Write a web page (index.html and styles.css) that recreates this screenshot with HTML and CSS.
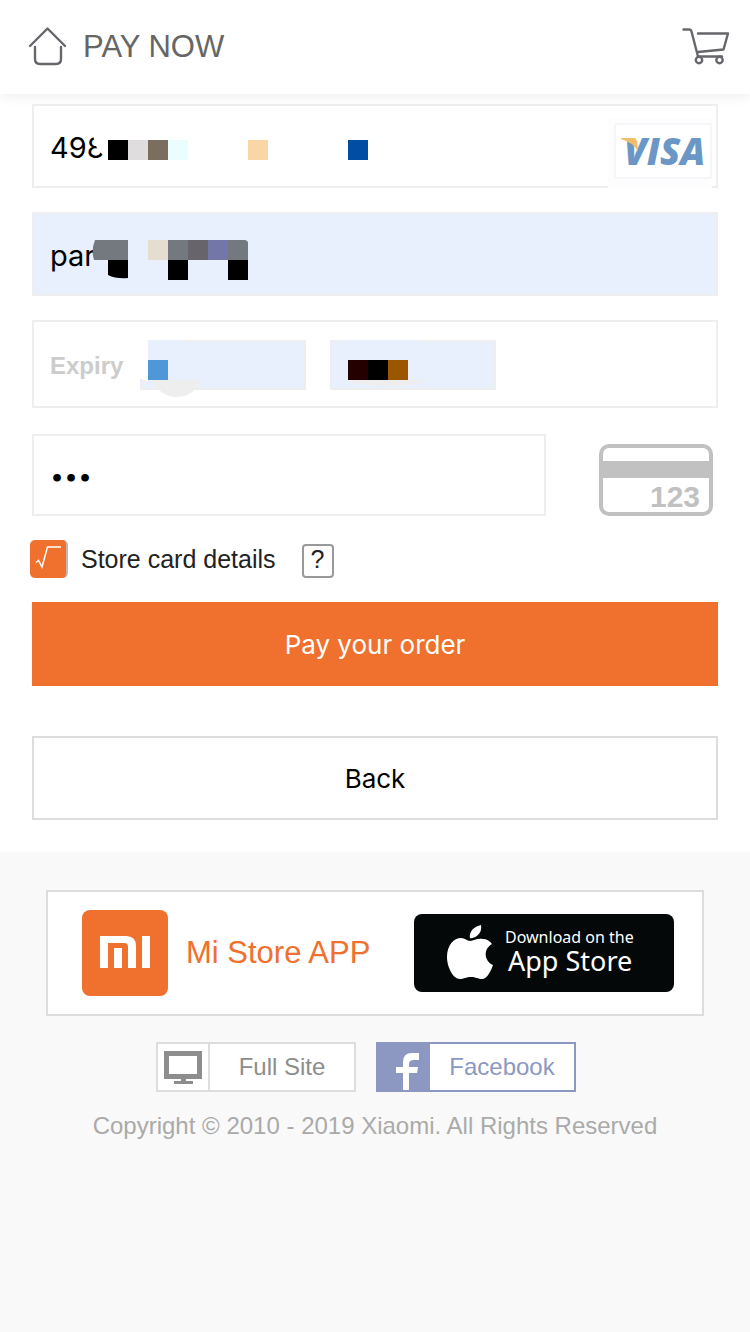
FILE: index.html
```html
<!DOCTYPE html>
<html lang="en">
<head>
<meta charset="utf-8">
<meta name="viewport" content="width=device-width">
<title>Pay now</title>
<link rel="stylesheet" href="styles.css">
</head>
<body>
<header class="topbar">
  <a class="topbar-link" href="#" aria-label="Home">
    <svg width="40" height="42" viewBox="0 0 40 42" fill="none" stroke="#66676c" stroke-width="2.4" stroke-linecap="round" stroke-linejoin="round"><path d="M3 20 20.500 2.500 38 20M8 21v12q0 5 5 5h16q5 0 5-5V21"/></svg>
  </a>
  <h1 class="topbar-title">PAY NOW</h1>
  <a class="topbar-link" href="#" aria-label="Cart">
    <svg width="48" height="38" viewBox="0 0 48 38" fill="none" stroke="#66676c" stroke-width="2.400" stroke-linecap="round" stroke-linejoin="round"><path d="M1.500 1.500H7q2 0 2.500 2L16 28.500h24M16 5.500H46L41.500 21.500 16 24"/><circle cx="17" cy="32" r="3.200"/><circle cx="37.500" cy="32" r="3.200"/></svg>
  </a>
</header>

<main class="page">
  <form class="pay-form">
    <div class="field">
      <input class="box" type="text" value="498" aria-label="Card number">
      <svg class="overlay" width="380" height="80" viewBox="0 0 380 80"><path fill="#fff" d="M60 24h16v28h-4l-3-3q-6-3-9-25z"/><g shape-rendering="crispEdges"><path d="M76 36h20v20H76z"/><path fill="#dfdddd" d="M96 36h20v20H96z"/><path fill="#7c6e5e" d="M116 36h20v20h-20z"/><path fill="#ebfeff" d="M136 36h20v20h-20z"/><path fill="#f8d6a5" d="M216 36h20v20h-20z"/><path fill="#004da3" d="M316 36h20v20h-20z"/></g></svg>
      <svg class="visa" width="104" height="70" viewBox="0 0 104 70" role="img" aria-label="Visa"><path fill="#fdfdfd" d="M0 0h104v70H0z"/><rect x="7" y="6" width="96" height="54" rx="2" fill="#fff" stroke="#f5f5fa" stroke-width="2"/><text class="visa-text" x="16" y="47">VISA</text><path fill="#f1bd69" d="M13 20h13q2 0 3 3l1 10Q24 24 13 21z"/></svg>
    </div>
    <div class="field">
      <input class="box filled" type="text" value="par" aria-label="Name on card">
      <svg class="overlay" width="380" height="80" viewBox="0 0 380 80"><path fill="#74787f" d="M63 28h33v20H62q-3-10 1-20zM136 28h20v20h-20zM196 28h16q4 0 4 3v17h-20z"/><path d="M76 48h20v18q-12 1-20-3zM136 48h20v20h-20zM196 48h20v20h-20z"/><path fill="#e5ddd0" d="M116 28h20v20h-20z"/><path fill="#67656b" d="M156 28h20v20h-20z"/><path fill="#7277a8" d="M176 28h20v20h-20z"/></svg>
    </div>
    <div class="field expiry" role="group" aria-labelledby="expiry-label">
      <span class="expiry-label" id="expiry-label">Expiry</span>
      <input class="part" type="text" aria-label="Expiry month">
      <input class="part" type="text" aria-label="Expiry year">
      <svg class="overlay" width="480" height="84" viewBox="0 0 480 84"><path fill="#fff" d="M107 19h9v43l-9-4z"/><path fill="#e8effd" d="M116 20h34v3h-34zM308 20h80v3h-80z"/><path fill="#eee" d="M118 60h51q-7 17-25 17-14 0-26-17zM316 60h78q-8 6-39 6t-39-6z"/><path fill="#4f97d6" d="M116 40h20v20h-20z"/><path fill="#250000" d="M316 40h20v20h-20z"/><path d="M336 40h20v20h-20z"/><path fill="#9a5700" d="M356 40h20v20h-20z"/></svg>
    </div>
    <div class="cvv-row">
      <input class="box cvv" type="password" value="123" aria-label="Security code">
      <svg width="114" height="72" viewBox="0 0 114 72" role="img" aria-label="Security code on card"><rect x="2" y="2" width="110" height="68" rx="8" fill="#fff" stroke="#c1c1c1" stroke-width="4"/><path fill="#c1c1c1" d="M2 17h110v17H2z"/><text class="card-code" x="51" y="63">123</text></svg>
    </div>
    <div class="store-row">
      <span class="check"><input id="store" type="checkbox" checked><svg width="38" height="38" viewBox="0 0 38 38" fill="none" stroke="#fff" stroke-width="1.500"><path d="M6 22.500 8.500 20.500 12 27 17.500 7H31"/></svg></span>
      <label for="store">Store card details</label>
      <button class="help" type="button">?</button>
    </div>
    <button class="btn primary" type="submit">Pay your order</button>
    <button class="btn" type="button">Back</button>
  </form>
</main>

<footer class="footer">
  <div class="app-card">
    <a class="mi" href="#">
      <svg width="86" height="86" viewBox="0 0 86 86" aria-hidden="true"><rect width="86" height="86" rx="8" fill="#f0702d"/><path fill="#fff" d="M18 26h26q10 0 10 10v22h-8V37q0-4-4-4H26v25h-8zM32 38h8v20h-8zM60 26h8v32h-8z"/></svg>
      <span>Mi Store APP</span>
    </a>
    <a class="appstore" href="#">
      <svg width="46" height="55" viewBox="0 0 46 55" fill="#fff" aria-hidden="true"><path d="M34 0q1 6-3 10-4 4-8 3-1-5 3-9 3-3 8-4zM23 16c4 0 7-3 13-2 4 0 7 2 9 5-9 5-8 17 1 21-2 6-6 14-11 14-4 0-6-2-11-2s-7 2-11 2C6 54 0 42 0 32 0 20 7 13 14 13c4 0 6 3 9 3z"/></svg>
      <span class="appstore-text"><small>Download on the</small><span>App Store</span></span>
    </a>
  </div>
  <nav class="links">
    <a class="link" href="#"><span class="link-icon"><svg width="38" height="33" viewBox="0 0 38 33" fill="#8d8d8d" aria-hidden="true"><path fill-rule="evenodd" d="M0 0h38v28H0zM5 5v18h28V5z"/><path d="M17 28h5v2h7v3H10v-3h7z"/></svg></span><span class="link-text">Full Site</span></a>
    <a class="link facebook" href="#"><span class="link-icon"><svg width="24" height="37" viewBox="0 0 24 37" fill="#fff" aria-hidden="true"><path d="M7 37V20H0v-6h7V9q0-9 9-9h7v7h-5q-5 0-5 4v3h9l-1 6h-8v17z"/></svg></span><span class="link-text">Facebook</span></a>
  </nav>
  <p class="copyright">Copyright © 2010 - 2019 Xiaomi. All Rights Reserved</p>
</footer>
</body>
</html>
```
FILE: styles.css
```css
* {
  box-sizing: border-box;
}

body {
  margin: 0;
  min-height: 100vh;
  display: flex;
  flex-direction: column;
  background: #fff;
  color: #222;
  font-family: "Liberation Sans", Arial, sans-serif;
}

svg {
  display: block;
  flex: none;
}

a {
  color: inherit;
  text-decoration: none;
}

input,
button {
  margin: 0;
  font-family: Inter, sans-serif;
}

.topbar {
  height: 94px;
  padding: 0 20px 0 27px;
  display: flex;
  align-items: center;
  gap: 16px;
  box-shadow: 0 2px 12px rgba(0, 0, 0, 0.08);
}

.topbar-title {
  flex: 1;
  margin: 0;
  color: #666;
  font-size: 31px;
  font-weight: 400;
}

.pay-form {
  padding: 10px 32px 32px;
  display: flex;
  flex-direction: column;
}

.field {
  position: relative;
  margin: 0 0 24px;
}

.box {
  display: block;
  width: 100%;
  height: 84px;
  padding: 2px 16px 0;
  border: 2px solid #eee;
  border-radius: 0;
  background: #fff;
  color: #000;
  font-size: 29px;
}

.filled {
  background: #e8effd;
}

.overlay {
  position: absolute;
  top: 0;
  left: 0;
  pointer-events: none;
}

.visa {
  position: absolute;
  right: 6px;
  bottom: 0;
}

.visa-text {
  fill: #6b97c6;
  font: italic 800 37px "Open Sans", sans-serif;
}

.expiry {
  height: 88px;
  margin-bottom: 26px;
  padding: 2px 16px 0;
  display: flex;
  align-items: center;
  border: 2px solid #eee;
}

.expiry .overlay {
  top: -2px;
  left: -2px;
}

.expiry-label {
  width: 90px;
  padding-top: 2px;
  color: #ccc;
  font-size: 24px;
  font-weight: 700;
}

.part {
  width: 166px;
  height: 50px;
  margin-right: 24px;
  border: 2px solid #eee;
  background: #e8effd;
}

.cvv-row {
  display: flex;
  align-items: flex-end;
  gap: 53px;
  padding-right: 5px;
}

.cvv {
  flex: 1;
  min-width: 0;
  height: 82px;
  padding-top: 6px;
  font: 700 22px "DejaVu Sans", sans-serif;
}

.card-code {
  fill: #c1c1c1;
  font: 700 30px "Liberation Sans", Arial, sans-serif;
}

.store-row {
  margin: 24px 0 24px -2px;
  display: flex;
  align-items: center;
  font-size: 25px;
}

.check {
  position: relative;
  margin-right: 13px;
}

.check input {
  display: block;
  appearance: none;
  width: 38px;
  height: 38px;
  border-radius: 5px;
  border-right: 2px solid #bbb;
  background: #f0702d;
}

.check svg {
  position: absolute;
  top: 0;
  left: 0;
  pointer-events: none;
}

.help {
  width: 32px;
  height: 34px;
  margin: 4px 0 0 26px;
  padding: 0 0 4px;
  border: 2px solid #999;
  border-radius: 4px;
  background: #fff;
  color: #222;
  font: 25px/26px "Liberation Sans", Arial, sans-serif;
}

.btn {
  height: 84px;
  border: 2px solid #ddd;
  border-radius: 0;
  background: #fff;
  color: #000;
  font-size: 26px;
}

.primary {
  margin-bottom: 50px;
  border: 0;
  background: #f0702d;
  color: #fff;
}

.footer {
  flex: 1;
  padding: 38px 46px;
  display: flex;
  flex-direction: column;
  background: #f9f9f9;
}

.app-card {
  height: 126px;
  padding: 0 28px 0 34px;
  display: flex;
  align-items: center;
  justify-content: space-between;
  border: 2px solid #ddd;
  background: #fff;
}

.mi {
  display: flex;
  align-items: center;
  gap: 18px;
  color: #f0702d;
  font-size: 31px;
}

.appstore {
  width: 260px;
  height: 78px;
  padding: 0 0 2px 33px;
  display: flex;
  align-items: center;
  gap: 12px;
  border-radius: 8px;
  background: #050808;
  color: #fff;
}

.appstore-text {
  display: flex;
  flex-direction: column;
  padding-bottom: 4px;
  font: 27px/27px "Noto Sans", sans-serif;
}

.appstore-text small {
  font-size: 16px;
  line-height: 20px;
}

.appstore-text span {
  padding-left: 3px;
}

.links {
  margin: 26px 0 18px;
  display: flex;
  justify-content: center;
  gap: 20px;
  padding-right: 18px;
}

.link {
  width: 200px;
  height: 50px;
  display: flex;
  border: 2px solid #ddd;
  background: #fff;
  color: #8d8d8d;
  font-size: 24px;
}

.link-icon {
  width: 52px;
  display: flex;
  align-items: center;
  justify-content: center;
  border-right: 2px solid #ddd;
}

.link-text {
  flex: 1;
  align-self: center;
  text-align: center;
}

.facebook {
  border-color: #8c98c1;
  color: #8c98c1;
}

.facebook .link-icon {
  align-items: flex-end;
  padding-left: 10px;
  border-color: #8c98c1;
  background: #8c98c1;
}

.copyright {
  margin: 0;
  color: #aaa;
  font-size: 24px;
  line-height: 32px;
  text-align: center;
}
```
